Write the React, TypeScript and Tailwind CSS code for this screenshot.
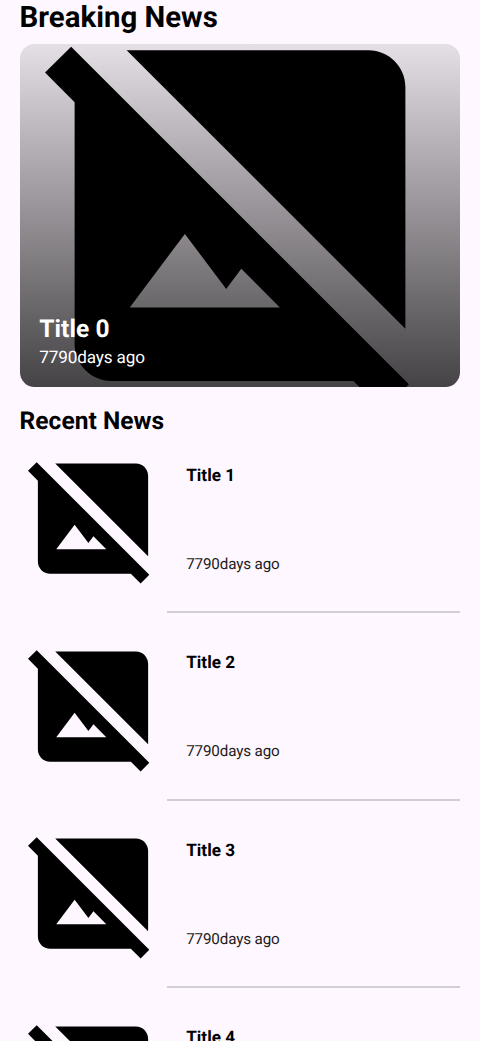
function BrokenImage({ className }: { className: string }) {
  return (
    <svg viewBox="0 0 24 24" fill="#000" className={className} aria-hidden="true">
      <path d="M21.19 21.19 2.81 2.81 1.39 4.22 3 5.83V19c0 1.1.9 2 2 2h13.17l1.61 1.61 1.41-1.42zM6 17l3-4 2.25 3 .82-1.1 2.1 2.1H6zM21 18.17 5.83 3H19c1.1 0 2 .9 2 2v13.17z" />
    </svg>
  );
}

function NewsRow({ title, age }: { title: string; age: string }) {
  return (
    <article className="flex h-[187.6px]">
      <BrokenImage className="size-[147px] shrink-0 -translate-x-[0.5px]" />
      <div className="flex grow flex-col">
        <div className="flex h-[147px] flex-col justify-between pt-[20.6px] pb-[19.2px] pl-[19.6px]">
          <h3 className="text-[17.15px] leading-[21px] font-bold text-black">{title}</h3>
          <p className="text-[15.2px] leading-[17px] tracking-[-0.14px] text-[#1d1b20]">{age}</p>
        </div>
        <div className="mt-[19px] h-[2px] bg-[#d3cdd8]" />
      </div>
    </article>
  );
}

const recent = ["Title 1", "Title 2", "Title 3", "Title 4"];

export default function App() {
  return (
    <main className="h-[1041px] overflow-hidden bg-[#fef7ff] px-[19.6px] font-['Roboto',sans-serif] [text-rendering:geometricPrecision]">
      <h1 className="h-11 pt-px text-[29.4px] leading-[34px] font-bold text-black">Breaking News</h1>
      <section className="relative flex h-[343px] items-center overflow-hidden rounded-[14.7px]">
        <div className="absolute inset-0 bg-linear-to-b from-black/10 to-black/73" />
        <BrokenImage className="relative size-[441px] shrink-0 -translate-x-[0.5px]" />
        <div className="absolute bottom-[19px] left-[19.6px] text-white">
          <h2 className="text-[24.5px] leading-[29px] font-bold tracking-[0.1px]">Title 0</h2>
          <p className="mt-[5px] text-[17.15px] leading-[20px] tracking-[-0.14px]">7790days ago</p>
        </div>
      </section>
      <h2 className="mt-[18.6px] h-[39.4px] text-[24.5px] leading-[29px] font-bold tracking-[0.04px] text-black">
        Recent News
      </h2>
      {recent.map((title) => (
        <NewsRow key={title} title={title} age="7790days ago" />
      ))}
    </main>
  );
}
